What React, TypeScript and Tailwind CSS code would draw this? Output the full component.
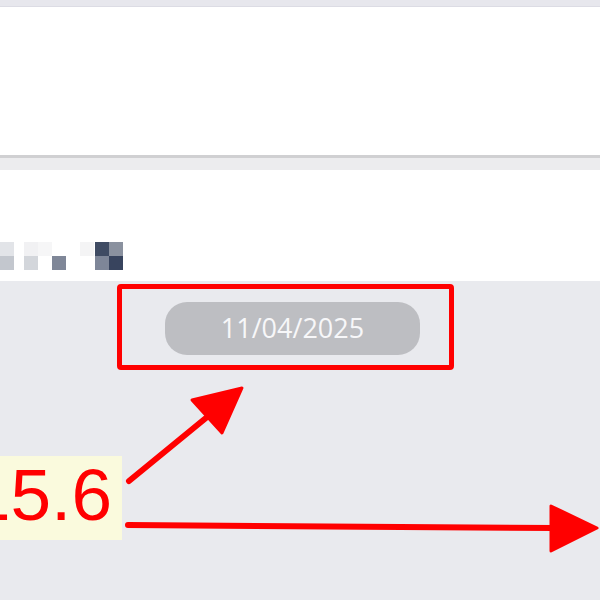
import React from 'react';

const blocks: { x: number; y: number; c: string }[] = [
  { x: 0, y: 242, c: '#e2e4e8' },
  { x: 0, y: 256, c: '#c3c7ce' },
  { x: 24, y: 242, c: '#f1f1f3' },
  { x: 24, y: 256, c: '#d3d6db' },
  { x: 38, y: 242, c: '#f6f6f7' },
  { x: 52, y: 256, c: '#7f8798' },
  { x: 80, y: 242, c: '#f4f4f5' },
  { x: 95, y: 242, c: '#3f4b63' },
  { x: 95, y: 256, c: '#7e8698' },
  { x: 109, y: 242, c: '#8a919f' },
  { x: 109, y: 256, c: '#38445e' },
];

const App: React.FC = () => {
  return (
    <div
      className="relative w-[600px] h-[600px] overflow-hidden bg-[#e9eaee] flex flex-col"
      style={{ fontFamily: '"Liberation Sans", Arial, sans-serif' }}
    >
      {/* top strip */}
      <div className="h-[7px] bg-[#e7e7ed] border-b border-[#dcdce4]" />
      <div className="h-[148px] bg-white" />
      <div className="h-[3px] bg-[#d0d0d2]" />
      <div className="h-[12px] bg-[#ececee]" />

      {/* blurred row */}
      <div className="relative h-[111px] bg-white">
        {blocks.map((b, i) => (
          <div
            key={i}
            className="absolute w-[14px] h-[14px]"
            style={{ left: b.x, top: b.y - 170, background: b.c }}
          />
        ))}
      </div>

      {/* chat area */}
      <div className="flex-1 pt-[21px] pl-[165px]">
        <div className="w-[255px] h-[53px] rounded-[22px] bg-[#bdbec2] flex items-center justify-center font-['Open_Sans',sans-serif] font-medium text-[27px] text-[#f7f7f9]">
          11/04/2025
        </div>
      </div>

      {/* annotations */}
      <div className="absolute left-[117px] top-[284px] w-[337px] h-[86px] border-[5px] border-[#ff0000] rounded-[4px]" />
      <div className="absolute left-0 top-[456px] w-[122px] h-[84px] bg-[#fafadd] overflow-hidden">
        <span className="absolute right-[10px] top-[-3px] text-[73px] leading-[84px] text-[#ff0000] whitespace-nowrap">
          15.6
        </span>
      </div>
      <svg className="absolute left-0 top-0" width="600" height="600" viewBox="0 0 600 600">
        <line x1="129" y1="481" x2="212" y2="413" stroke="#ff0000" strokeWidth="6" strokeLinecap="round" />
        <polygon points="242,388 192,400 222,433" fill="#ff0000" stroke="#ff0000" strokeWidth="3" strokeLinejoin="round" />
        <line x1="128" y1="525" x2="555" y2="528" stroke="#ff0000" strokeWidth="6" strokeLinecap="round" />
        <polygon points="597,528 551,506 551,551" fill="#ff0000" stroke="#ff0000" strokeWidth="3" strokeLinejoin="round" />
      </svg>
    </div>
  );
};

export default App;
